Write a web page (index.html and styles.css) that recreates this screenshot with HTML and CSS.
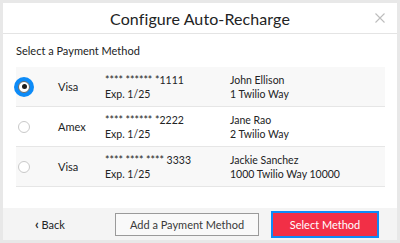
FILE: index.html
```html
<!DOCTYPE html>
<html>
<head>
<meta charset="utf-8">
<link rel="stylesheet" href="styles.css">
</head>
<body>
<div class="modal">
  <header class="modal-header">
    <span></span>
    <h1 class="title">Configure Auto-Recharge</h1>
    <button class="close" aria-label="Close">
      <svg width="10" height="10" viewBox="0 0 10 10"><path d="M0.5 0.5 L9.5 9.5 M9.5 0.5 L0.5 9.5" stroke="#bdbdbd" stroke-width="1.1" fill="none"/></svg>
    </button>
  </header>
  <section class="modal-body">
    <p class="label">Select a Payment Method</p>
    <div class="methods">
      <div class="row shaded">
        <span class="radio checked"><span class="dot"></span></span>
        <span class="brand">Visa</span>
        <span class="stack"><span>**** ****** *1111</span><span>Exp. 1/25</span></span>
        <span class="stack"><span>John Ellison</span><span>1 Twilio Way</span></span>
      </div>
      <div class="row">
        <span class="radio"></span>
        <span class="brand">Amex</span>
        <span class="stack"><span>**** ****** *2222</span><span>Exp. 1/25</span></span>
        <span class="stack"><span>Jane Rao</span><span>2 Twilio Way</span></span>
      </div>
      <div class="row shaded">
        <span class="radio"></span>
        <span class="brand">Visa</span>
        <span class="stack"><span>**** **** **** 3333</span><span>Exp. 1/25</span></span>
        <span class="stack"><span>Jackie Sanchez</span><span>1000 Twilio Way 10000</span></span>
      </div>
    </div>
  </section>
  <footer class="modal-footer">
    <button class="back"><span class="chev">&#x2039;</span> Back</button>
    <button class="btn secondary">Add a Payment Method</button>
    <button class="btn primary">Select Method</button>
  </footer>
</div>
</body>
</html>
```
FILE: styles.css
```css
* { box-sizing: border-box; }
html, body { margin: 0; padding: 0; }
body {
  background: #e8e8e8;
  padding: 3px;
  width: 400px;
  height: 243px;
  font-family: Lato, "Open Sans", sans-serif;
  color: #222324;
}
.modal {
  width: 394px;
  height: 237px;
  background: #fff;
  display: flex;
  flex-direction: column;
}
.modal-header {
  height: 31px;
  border-bottom: 1px solid #e4e4e4;
  display: grid;
  grid-template-columns: 1fr auto 1fr;
  align-items: center;
}
.title {
  margin: 0;
  font-size: 16px;
  font-weight: 400;
  letter-spacing: 0.1px;
}
.close {
  justify-self: end;
  margin-right: 12px;
  background: none;
  border: 0;
  padding: 0;
  display: flex;
}
.modal-body {
  flex: 1;
  padding: 0 12px 0 13px;
}
.label {
  margin: 10px 0 9px;
  font-size: 11px;
  line-height: 14px;
}
.methods {
  font-size: 11px;
}
.row {
  height: 40px;
  border-bottom: 1px solid #e6e6e6;
  display: grid;
  grid-template-columns: 42px 47px 125px 1fr;
  align-items: center;
}
.row.shaded { background: #f8f8f8; }
.radio {
  width: 12px;
  height: 12px;
  border-radius: 50%;
  border: 1px solid #c9c9c9;
  background: #fff;
  margin-left: 2px;
  display: flex;
  align-items: center;
  justify-content: center;
}
.radio.checked {
  border-color: #6b6b6b;
  box-shadow: 0 0 0 4px #0d8bf7;
}
.dot {
  width: 5px;
  height: 5px;
  border-radius: 50%;
  background: #1b1b1b;
}
.brand { font-size: 11px; }
.stack {
  display: flex;
  flex-direction: column;
  line-height: 14px;
  font-size: 10.5px;
}
.modal-footer {
  height: 32px;
  background: #f4f4f4;
  display: flex;
  align-items: center;
  padding: 0 17px 0 32px;
}
.back {
  background: none;
  border: 0;
  padding: 0;
  font-family: inherit;
  font-size: 11px;
  color: #222324;
  width: 80px;
  text-align: left;
}
.chev { font-size: 13px; font-weight: 700; }
.btn {
  font-family: inherit;
  font-size: 11px;
  height: 23px;
}
.secondary {
  width: 144px;
  background: #f9f9f9;
  border: 1px solid #9a9a9a;
  color: #3a3a3a;
  margin-right: 14px;
}
.primary {
  width: 104px;
  background: #f22f46;
  color: #fff;
  border: 0;
  outline: 2px solid #0d8bf7;
  outline-offset: 0;
}
```
